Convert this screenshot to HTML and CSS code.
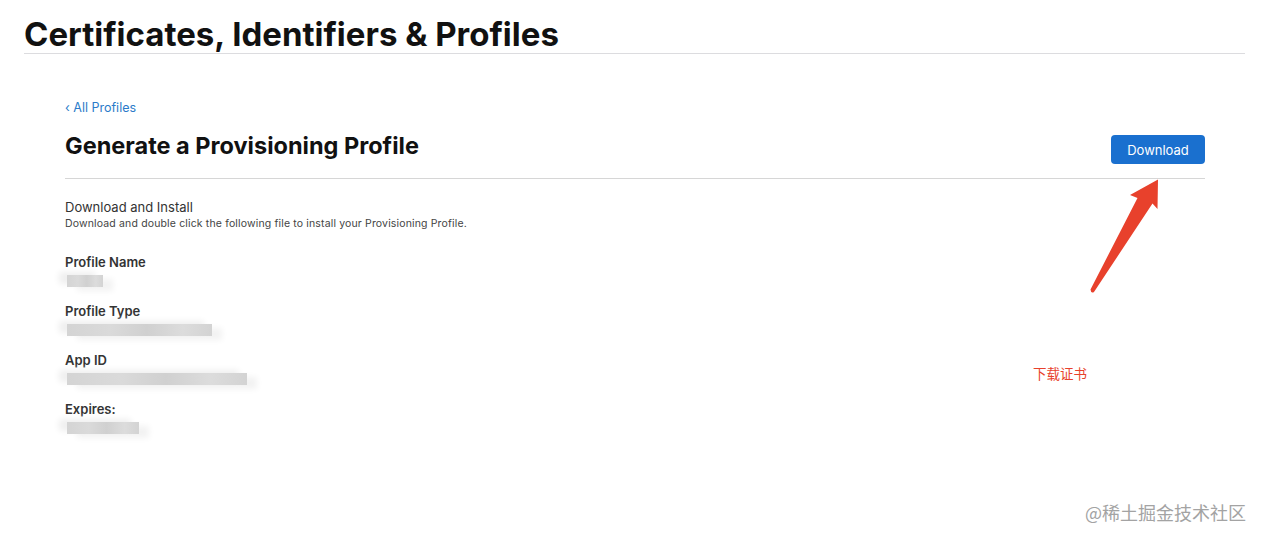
FILE: index.html
```html
<!doctype html>
<html lang="en">
<head>
	<meta charset="UTF-8">
	<title>Generate a Provisioning Profile</title>
	<link rel="stylesheet" href="styles.css">
</head>
<body>
	<header id="header">
		<h1>Certificates, Identifiers &amp; Profiles</h1>
	</header>

	<div id="main">
		<a href="#" class="back">&lsaquo; All Profiles</a>

		<div class="title-row">
			<h2>Generate a Provisioning Profile</h2>
			<button class="btn-download">Download</button>
		</div>

		<div class="install">
			<p class="install-title">Download and Install</p>
			<p class="install-desc">Download and double click the following file to install your Provisioning Profile.</p>
		</div>

		<dl class="fields">
			<dt>Profile Name</dt>
			<dd><span class="blur" style="width: 36px"></span></dd>
			<dt>Profile Type</dt>
			<dd><span class="blur" style="width: 145px"></span></dd>
			<dt>App ID</dt>
			<dd><span class="blur" style="width: 180px"></span></dd>
			<dt>Expires:</dt>
			<dd><span class="blur" style="width: 72px"></span></dd>
		</dl>
	</div>

	<!-- annotation -->
	<svg class="arrow" width="90" height="130" viewBox="1080 170 90 130">
		<path d="M1090.5 289.5 L1137.5 198 L1130 195 L1158 179.5 L1157.5 209 L1152.5 203.5 L1094 292 Q1091 294 1090.5 289.5 Z" fill="#e8412c"/>
	</svg>
	<span class="note">下载证书</span>

	<span class="watermark">@稀土掘金技术社区</span>
</body>
</html>
```

FILE: styles.css
```css
*{
	margin: 0;
	padding: 0;
}

body{
	font-family: Inter, "Noto Sans", "Noto Sans CJK SC", sans-serif;
	color: #1d1d1f;
	background: #fff;
	position: relative;
	height: 540px;
	overflow: hidden;
}

#header{
	margin: 0 18px 0 24px;
	padding-top: 15px;
	border-bottom: 1px solid #dcdcdf;
}

#header h1{
	font-size: 33px;
	font-weight: 700;
	line-height: 38px;
	letter-spacing: 0;
	color: #111;
}

#main{
	margin-left: 65px;
	width: 1140px;
	padding-top: 46px;
}

.back{
	display: block;
	font-size: 12.5px;
	line-height: 16px;
	color: #2b7bc9;
	text-decoration: none;
}

.title-row{
	display: flex;
	justify-content: space-between;
	align-items: flex-end;
	margin-top: 16px;
	padding-bottom: 14px;
	border-bottom: 1px solid #d6d6d6;
}

.title-row h2{
	font-size: 23.5px;
	font-weight: 700;
	line-height: 28px;
	letter-spacing: 0;
	padding-bottom: 4px;
	color: #111;
}

.btn-download{
	width: 94px;
	height: 29px;
	border: none;
	border-radius: 4px;
	background: #1a70cf;
	color: #fff;
	font-family: inherit;
	font-size: 13px;
	cursor: pointer;
}

.install{
	margin-top: 20px;
}

.install-title{
	font-size: 13px;
	line-height: 16px;
	color: #333;
}

.install-desc{
	font-size: 10.5px;
	line-height: 14px;
	margin-top: 2px;
	color: #444;
	letter-spacing: 0.15px;
}

.fields{
	margin-top: 23px;
}

.fields dt{
	font-size: 13px;
	font-weight: 600;
	line-height: 16px;
	color: #333;
}

.fields dd{
	height: 33px;
	padding-top: 5px;
	box-sizing: border-box;
}

.blur{
	display: block;
	height: 12px;
	margin-left: 2px;
	background: linear-gradient(90deg, #d4d4d4 0, #dadada 30%, #d0d0d0 55%, #dcdcdc 80%, #d3d3d3 100%);
	box-shadow: -8px -3px 6px #efefef, 10px 4px 6px #f2f2f2;
	filter: blur(0.6px);
}

.arrow{
	position: absolute;
	left: 1080px;
	top: 170px;
}

.note{
	position: absolute;
	left: 1033px;
	top: 364px;
	font-size: 13.5px;
	line-height: 18px;
	color: #e8412c;
	font-family: "Noto Sans CJK SC", sans-serif;
}

.watermark{
	position: absolute;
	left: 1085px;
	top: 500px;
	font-size: 18px;
	line-height: 24px;
	color: #a3a3a3;
	font-family: "Noto Sans CJK SC", sans-serif;
}
```
